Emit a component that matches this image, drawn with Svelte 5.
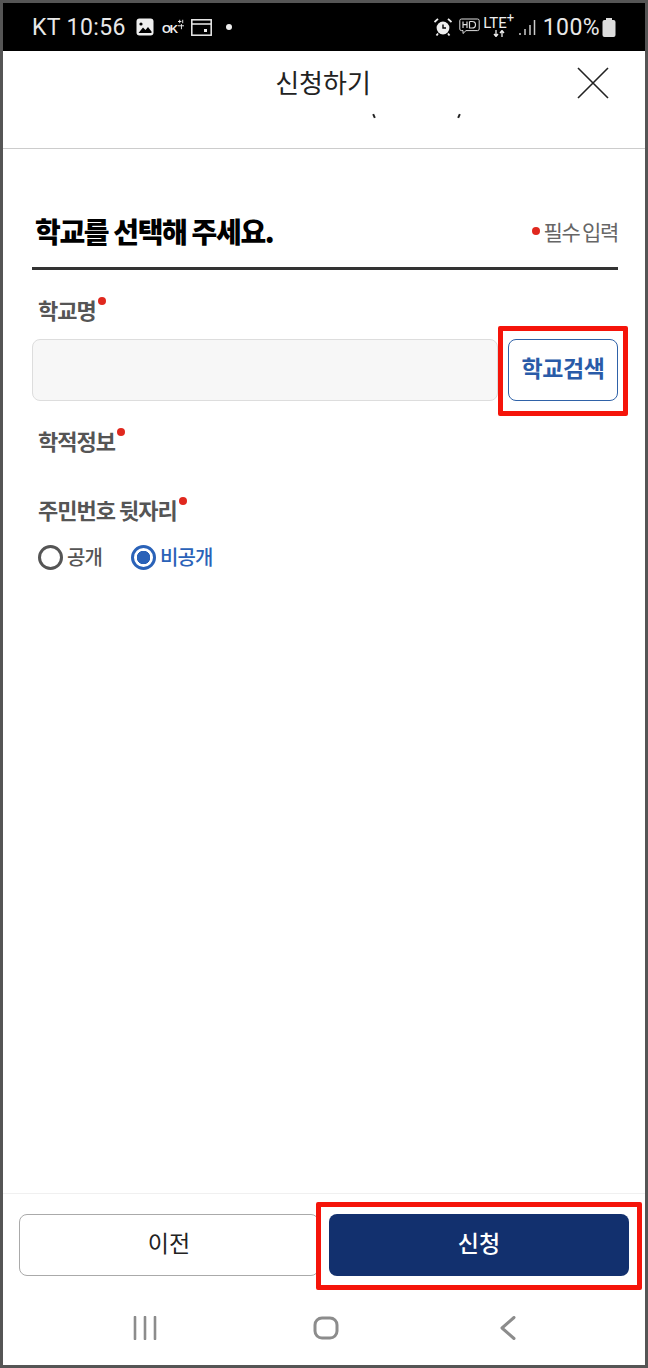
<script>
  let privacy = $state('private');
  const sections = ['학적정보'];
</script>

<div class="frame">
  <div class="status">
    <div class="status-left">
      <span class="clock">KT 10:56</span>
      <svg class="gallery" width="18" height="18" viewBox="0 0 18 18">
        <rect x="0.5" y="0.5" width="17" height="17" rx="3" fill="#eee" />
        <circle cx="5" cy="6" r="1.6" fill="#000" />
        <path d="M2.5 15 L7 9.5 L9.5 12 L12 9 L15.5 13.5 V15 Z" fill="#000" />
      </svg>
      <span class="ok">OK</span>
      <svg class="ok-mark" width="6" height="11" viewBox="0 0 7 11">
        <path d="M2 0 V4 M0 2 H4 M5.5 0 V4 M0 7 H7 M4 5 V11" stroke="#eee" stroke-width="1.1" fill="none" />
      </svg>
      <svg class="card" width="21" height="17" viewBox="0 0 21 17">
        <rect x="0.8" y="0.8" width="19.4" height="15.4" fill="none" stroke="#eee" stroke-width="1.5" />
        <path d="M1 5 H20" stroke="#eee" stroke-width="1.5" />
        <rect x="13" y="10" width="3" height="3" fill="#eee" />
      </svg>
      <span class="dot"></span>
    </div>
    <div class="status-right">
      <svg width="18" height="18" viewBox="0 0 18 18">
        <circle cx="9" cy="10" r="6.4" fill="#eee" />
        <path d="M9 6.5 V10 H12" fill="none" stroke="#000" stroke-width="1.4" />
        <path d="M0.5 4 L4 0.8 M17.5 4 L14 0.8 M4 15.5 L2.5 17.5 M14 15.5 L15.5 17.5" stroke="#eee" stroke-width="1.8" />
      </svg>
      <svg class="hd" width="21" height="18" viewBox="0 0 21 18">
        <path d="M2.5 1 H18.5 Q20.2 1 20.2 2.6 V11 Q20.2 12.6 18.5 12.6 H7 L4 15.5 V12.6 H2.5 Q0.8 12.6 0.8 11 V2.6 Q0.8 1 2.5 1 Z" fill="none" stroke="#ddd" stroke-width="1" />
        <path d="M4 3.5 V10 M8 3.5 V10 M4 6.7 H8 M10.5 3.5 V10 H13 Q16.5 10 16.5 6.7 Q16.5 3.5 13 3.5 H10.5" fill="none" stroke="#ddd" stroke-width="1.2" />
      </svg>
      <div class="lte">
        <span>LTE<sup>+</sup></span>
        <svg width="12" height="7" viewBox="0 0 12 7">
          <path d="M3 0 V6 M1 4 L3 6.5 L5 4 M9 7 V1 M7 3 L9 0.5 L11 3" fill="none" stroke="#eee" stroke-width="1.3" />
        </svg>
      </div>
      <svg class="signal" width="17" height="17" viewBox="0 0 17 17">
        <path d="M1 14 V16 M6 10 V16 M11 6 V16 M15.5 1 V16" stroke="#ccc" stroke-width="1.5" />
      </svg>
      <span class="clock">100%</span>
      <svg class="battery" width="14" height="19" viewBox="0 0 14 19">
        <rect x="4" y="0" width="6" height="3" fill="#ddd" />
        <rect x="0.5" y="2" width="13" height="17" rx="2" fill="#ddd" />
      </svg>
    </div>
  </div>

  <header class="top">
    <h1>신청하기</h1>
    <button class="close" aria-label="닫기">
      <svg width="32" height="32" viewBox="0 0 32 32">
        <path d="M1 1 L31 31 M31 1 L1 31" stroke="#222" stroke-width="1.6" />
      </svg>
    </button>
    <span class="clip clip-a"></span>
    <span class="clip clip-b"></span>
  </header>

  <main class="content">
    <div class="title-row">
      <h2>학교를 선택해 주세요.</h2>
      <span class="required-note"><i class="req"></i>필수 입력</span>
    </div>

    <div class="label first">학교명<i class="req sup"></i></div>
    <div class="school-row">
      <input class="school-input" type="text" disabled />
      <button class="search">학교검색</button>
    </div>

    {#each sections as section}
      <div class="label academic">{section}<i class="req sup"></i></div>
    {/each}

    <div class="label rrn">주민번호 뒷자리<i class="req sup"></i></div>
    <div class="radios">
      <button class="radio" onclick={() => (privacy = 'public')} class:on={privacy === 'public'}>
        <span class="ring"></span>공개
      </button>
      <button class="radio" onclick={() => (privacy = 'private')} class:on={privacy === 'private'}>
        <span class="ring"></span>비공개
      </button>
    </div>
  </main>

  <footer class="actions">
    <button class="prev">이전</button>
    <button class="submit">신청</button>
  </footer>

  <nav class="softkeys">
    <svg width="24" height="24" viewBox="0 0 24 24">
      <path d="M2 1 V23 M12 1 V23 M22 1 V23" stroke="#8c8c8c" stroke-width="2.6" stroke-linecap="round" />
    </svg>
    <svg class="home" width="26" height="24" viewBox="0 0 26 24">
      <rect x="2" y="2" width="22" height="20" rx="7" fill="none" stroke="#8c8c8c" stroke-width="3" />
    </svg>
    <svg width="16" height="24" viewBox="0 0 16 24">
      <path d="M14 1.5 L2 12 L14 22.5" fill="none" stroke="#8c8c8c" stroke-width="3" stroke-linecap="round" stroke-linejoin="round" />
    </svg>
  </nav>

  <span class="mark mark-search"></span>
  <span class="mark mark-submit"></span>
</div>

<style>
  :global(body) {
    margin: 0;
    background: #fff;
  }

  .frame {
    position: relative;
    box-sizing: border-box;
    width: 648px;
    height: 1368px;
    border: 3px solid #555;
    display: flex;
    flex-direction: column;
    background: #fff;
    font-family: "Noto Sans CJK KR", "Noto Sans", sans-serif;
  }

  .status {
    height: 48px;
    flex: none;
    background: #000;
    color: #eee;
    display: flex;
    justify-content: space-between;
    align-items: center;
    padding: 6px 29px 6px 29px;
    box-sizing: border-box;
  }

  .status-left,
  .status-right {
    display: flex;
    align-items: center;
  }

  .clock {
    font-family: Roboto, sans-serif;
    font-size: 23px;
    letter-spacing: 0.4px;
    color: #e8e8e8;
  }

  .gallery {
    margin-left: 10px;
  }

  .ok {
    margin-left: 8px;
    font-family: "Liberation Sans", sans-serif;
    font-size: 11.5px;
    font-weight: 700;
    letter-spacing: -1px;
    margin-top: 3px;
  }

  .ok-mark {
    margin-top: -6px;
    margin-left: 1px;
  }

  .card {
    margin-left: 7px;
  }

  .dot {
    width: 6px;
    height: 6px;
    border-radius: 50%;
    background: #eee;
    margin-left: 14px;
  }

  .status-right {
    gap: 7px;
  }

  .lte {
    display: flex;
    flex-direction: column;
    align-items: center;
    width: 30px;
    font-family: Roboto, sans-serif;
    font-size: 15px;
    line-height: 14px;
    margin-top: -1px;
    margin-left: -3px;
  }

  .lte span {
    white-space: nowrap;
  }

  .lte sup {
    font-size: 13px;
    line-height: 0;
  }

  .signal {
    margin-left: -2px;
  }

  .battery {
    margin-left: -5px;
  }

  .top {
    position: relative;
    height: 98px;
    flex: none;
    box-sizing: border-box;
    border-bottom: 1px solid #ccc;
    display: flex;
    justify-content: center;
    padding-top: 11px;
  }

  h1 {
    margin: 0;
    font-size: 26px;
    font-weight: 400;
    line-height: 40px;
    color: #222;
    letter-spacing: 0;
    transform: translateX(-1px);
  }

  .close {
    position: absolute;
    right: 36px;
    top: 16px;
    padding: 0;
    border: 0;
    background: none;
    display: flex;
  }

  .clip {
    position: absolute;
    top: 63px;
    width: 2px;
    height: 4px;
    background: #222;
  }

  .clip-a {
    left: 370px;
    transform: rotate(-25deg);
  }

  .clip-b {
    left: 455px;
    transform: rotate(25deg);
  }

  .content {
    flex: 1;
    padding: 0 27px 0 29px;
  }

  .title-row {
    height: 121px;
    box-sizing: border-box;
    border-bottom: 3px solid #333;
    display: flex;
    justify-content: space-between;
    align-items: flex-start;
    padding-top: 62px;
  }

  h2 {
    margin: 0 0 0 3px;
    font-size: 28px;
    line-height: 40px;
    font-weight: 900;
    color: #000;
    letter-spacing: -1.35px;
  }

  .required-note {
    display: flex;
    align-items: center;
    font-size: 21px;
    line-height: 40px;
    color: #666;
    letter-spacing: -1.3px;
    word-spacing: -1px;
    white-space: pre;
  }

  .req {
    display: inline-block;
    width: 8px;
    height: 8px;
    border-radius: 50%;
    background: #e0281e;
    margin-right: 4px;
  }

  .label {
    margin-left: 6px;
    font-size: 22px;
    line-height: 26px;
    font-weight: 700;
    color: #555;
    letter-spacing: -1px;
  }

  .label .req {
    vertical-align: top;
    margin: 1px 0 0 2px;
  }

  .label.first {
    margin-top: 26px;
  }

  .label.academic {
    margin-top: 26px;
  }

  .label.rrn {
    margin-top: 43px;
  }

  .school-row {
    display: flex;
    gap: 10px;
    margin-top: 17px;
    height: 62px;
  }

  .school-input {
    flex: 1;
    min-width: 0;
    box-sizing: border-box;
    background: #f7f7f7;
    border: 1px solid #ddd;
    border-radius: 8px;
  }

  .search {
    width: 110px;
    box-sizing: border-box;
    border: 1px solid #2f62a8;
    border-radius: 8px;
    background: #fff;
    color: #2a5ba8;
    font-family: inherit;
    font-size: 23px;
    font-weight: 700;
    letter-spacing: -0.4px;
    padding: 0 0 6px;
  }

  .radios {
    display: flex;
    gap: 29px;
    margin-left: 6px;
    margin-top: 22px;
  }

  .radio {
    display: flex;
    align-items: center;
    gap: 4px;
    padding: 0;
    border: 0;
    background: none;
    font-family: inherit;
    font-size: 20px;
    line-height: 26px;
    font-weight: 500;
    color: #555;
    letter-spacing: -0.9px;
  }

  .ring {
    width: 25px;
    height: 25px;
    box-sizing: border-box;
    border: 3px solid #555;
    border-radius: 50%;
    background: #fff;
  }

  .radio.on {
    color: #2a62b8;
  }

  .radio.on .ring {
    border-color: #2a62b8;
    background: radial-gradient(circle, #2a62b8 0 6.5px, #fff 7px);
  }

  .actions {
    flex: none;
    display: flex;
    gap: 10px;
    border-top: 1px solid #f0f0f0;
    padding: 20px 16px 14px;
  }

  .actions button {
    height: 62px;
    box-sizing: border-box;
    border-radius: 8px;
    font-family: inherit;
    font-size: 23px;
    padding: 0 0 6px;
  }

  .prev {
    flex: 299 1 0;
    background: #fff;
    border: 1px solid #aaa;
    color: #222;
  }

  .submit {
    flex: 301 1 0;
    background: #12306e;
    border: 0;
    color: #fff;
    font-weight: 500;
  }

  .softkeys {
    flex: none;
    height: 75px;
    box-sizing: border-box;
    display: flex;
    align-items: center;
    padding-left: 130px;
    padding-right: 129px;
    justify-content: space-between;
  }

  .home {
    margin-left: -6px;
  }

  .mark {
    position: absolute;
    box-sizing: border-box;
    border: 5px solid #f5140a;
    border-radius: 2px;
    pointer-events: none;
  }

  .mark-search {
    left: 495px;
    top: 323px;
    width: 130px;
    height: 90px;
  }

  .mark-submit {
    left: 313px;
    top: 1199px;
    width: 326px;
    height: 88px;
  }
</style>
